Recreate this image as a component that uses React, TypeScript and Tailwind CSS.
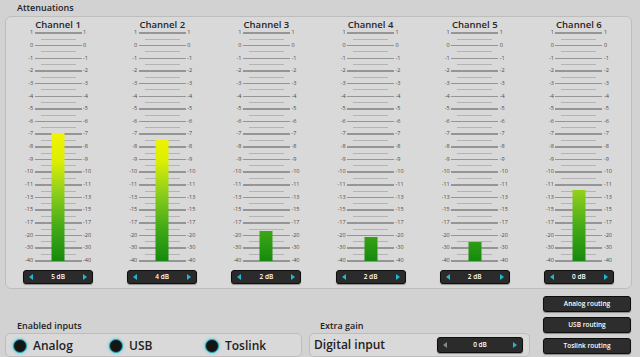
import React from "react";

const labels = ["1", "0", "-1", "-2", "-3", "-4", "-5", "-6", "-7", "-8", "-9", "-10", "-11", "-13", "-15", "-17", "-20", "-30", "-40"];

const channels = [
  { name: "Channel 1", bar: 128, value: "5 dB" },
  { name: "Channel 2", bar: 121, value: "4 dB" },
  { name: "Channel 3", bar: 30, value: "2 dB" },
  { name: "Channel 4", bar: 24, value: "2 dB" },
  { name: "Channel 5", bar: 19, value: "2 dB" },
  { name: "Channel 6", bar: 71, value: "0 dB" },
];

function Tri({ dir, dim }: { dir: "l" | "r"; dim?: boolean }) {
  return (
    <svg width="4" height="6" viewBox="0 0 4 6" className="shrink-0">
      {dir === "l" ? (
        <polygon points="4,0 4,6 0,3" fill={dim ? "#7a8a90" : "#1cb8d4"} />
      ) : (
        <polygon points="0,0 0,6 4,3" fill={dim ? "#7a8a90" : "#1cb8d4"} />
      )}
    </svg>
  );
}

function Stepper({ value, w, h, dimLeft }: { value: string; w: string; h: string; dimLeft?: boolean }) {
  return (
    <div
      className={`${w} ${h} flex items-center justify-between px-[5px] rounded-[3px] bg-[#2b2b2b] border border-[#0e0e0e] shadow-[0_1px_1px_rgba(0,0,0,0.35)] text-white text-[6.5px] font-semibold`}
    >
      <Tri dir="l" dim={dimLeft} />
      <span>{value}</span>
      <Tri dir="r" />
    </div>
  );
}

function Channel({ name, bar, value }: { name: string; bar: number; value: string }) {
  return (
    <div className="flex flex-col items-center">
      <div className="h-[12.83px] flex items-end text-[9.5px] leading-[10px] font-semibold text-[#262626]">{name}</div>
      <div className="relative flex flex-col">
        {labels.map((l, i) => (
          <React.Fragment key={l}>
            <div className="h-[6.333px] flex items-center justify-center text-[5.5px] leading-none text-[#4a4a4a]">
              <span className="w-[16px] text-right pr-[1.5px]">{l}</span>
              <span className="w-[47px] h-[1.5px] bg-[#959595]" />
              <span className="w-[16px] pl-[1.5px]">{l}</span>
            </div>
            {i < labels.length - 1 && (
              <div className="h-[6.333px] flex items-center justify-center">
                <span className="w-[35px] h-px bg-[#b3b3b3]" />
              </div>
            )}
          </React.Fragment>
        ))}
        <div
          className="absolute left-1/2 -translate-x-1/2 bottom-[3.167px] w-[13px] bg-[linear-gradient(to_bottom,#f2f400_0%,#dcee04_22%,#8fcf1c_46%,#3ea717_76%,#168a0e_100%)] bg-[length:13px_128px] bg-bottom bg-no-repeat"
          style={{ height: `${bar}px` }}
        />
      </div>
      <div className="mt-[5.83px]">
        <Stepper value={value} w="w-[70px]" h="h-[14px]" />
      </div>
    </div>
  );
}

function Radio({ label }: { label: string }) {
  return (
    <div className="w-[98.5px] flex items-center gap-[6px]">
      <span className="w-[14px] h-[14px] rounded-full bg-[#151515] border-[1.5px] border-[#1fb0c0] shadow-[0_0_3px_#3cc8d8]" />
      <span className="text-[12px] font-semibold text-[#1e1e1e]">{label}</span>
    </div>
  );
}

function RouteBtn({ label }: { label: string }) {
  return (
    <div className="w-[88px] h-[16px] flex items-center justify-center rounded-[3px] bg-[#2d2d2d] border border-[#0e0e0e] shadow-[0_1px_1px_rgba(0,0,0,0.35)] text-white text-[6.5px] font-semibold">
      {label}
    </div>
  );
}

export default function App() {
  return (
    <div
      className="w-[640px] h-[357px] overflow-hidden bg-[#d2d2d2] text-[#222]"
      style={{ fontFamily: '"Open Sans", "Noto Sans", sans-serif' }}
    >
      <div className="h-[16px] pl-[17px] pt-[2px] text-[9px] leading-[12px] font-semibold text-[#222]">Attenuations</div>
      <div className="ml-[5px] w-[627px] h-[273px] rounded-[6px] border border-[#bdbdbd] bg-[#d9d9d9] grid grid-cols-6">
        {channels.map((c) => (
          <Channel key={c.name} {...c} />
        ))}
      </div>
      <div className="flex h-[68px]">
        <div className="ml-[5px] w-[297px] pt-[30px] flex flex-col">
          <div className="h-[14px] pl-[12px] flex items-center text-[9px] font-semibold text-[#222]">Enabled inputs</div>
          <div className="h-[30px] rounded-[5px] border border-[#bdbdbd] bg-[#d9d9d9] pl-[7px] flex items-start pt-[3px]">
            <Radio label="Analog" />
            <Radio label="USB" />
            <Radio label="Toslink" />
          </div>
        </div>
        <div className="ml-[7px] w-[221px] pt-[30px] flex flex-col">
          <div className="h-[14px] pl-[11px] flex items-center text-[9px] font-semibold text-[#222]">Extra gain</div>
          <div className="h-[30px] rounded-[5px] border border-[#bdbdbd] bg-[#d9d9d9] pl-[4px] pr-[6px] pt-[3px] flex items-start justify-between">
            <span className="text-[12px] font-semibold text-[#1e1e1e] leading-[16px]">Digital input</span>
            <Stepper value="0 dB" w="w-[86px]" h="h-[16px]" dimLeft />
          </div>
        </div>
        <div className="ml-[13px] pt-[7px] flex flex-col gap-[5px]">
          <RouteBtn label="Analog routing" />
          <RouteBtn label="USB routing" />
          <RouteBtn label="Toslink routing" />
        </div>
      </div>
    </div>
  );
}
